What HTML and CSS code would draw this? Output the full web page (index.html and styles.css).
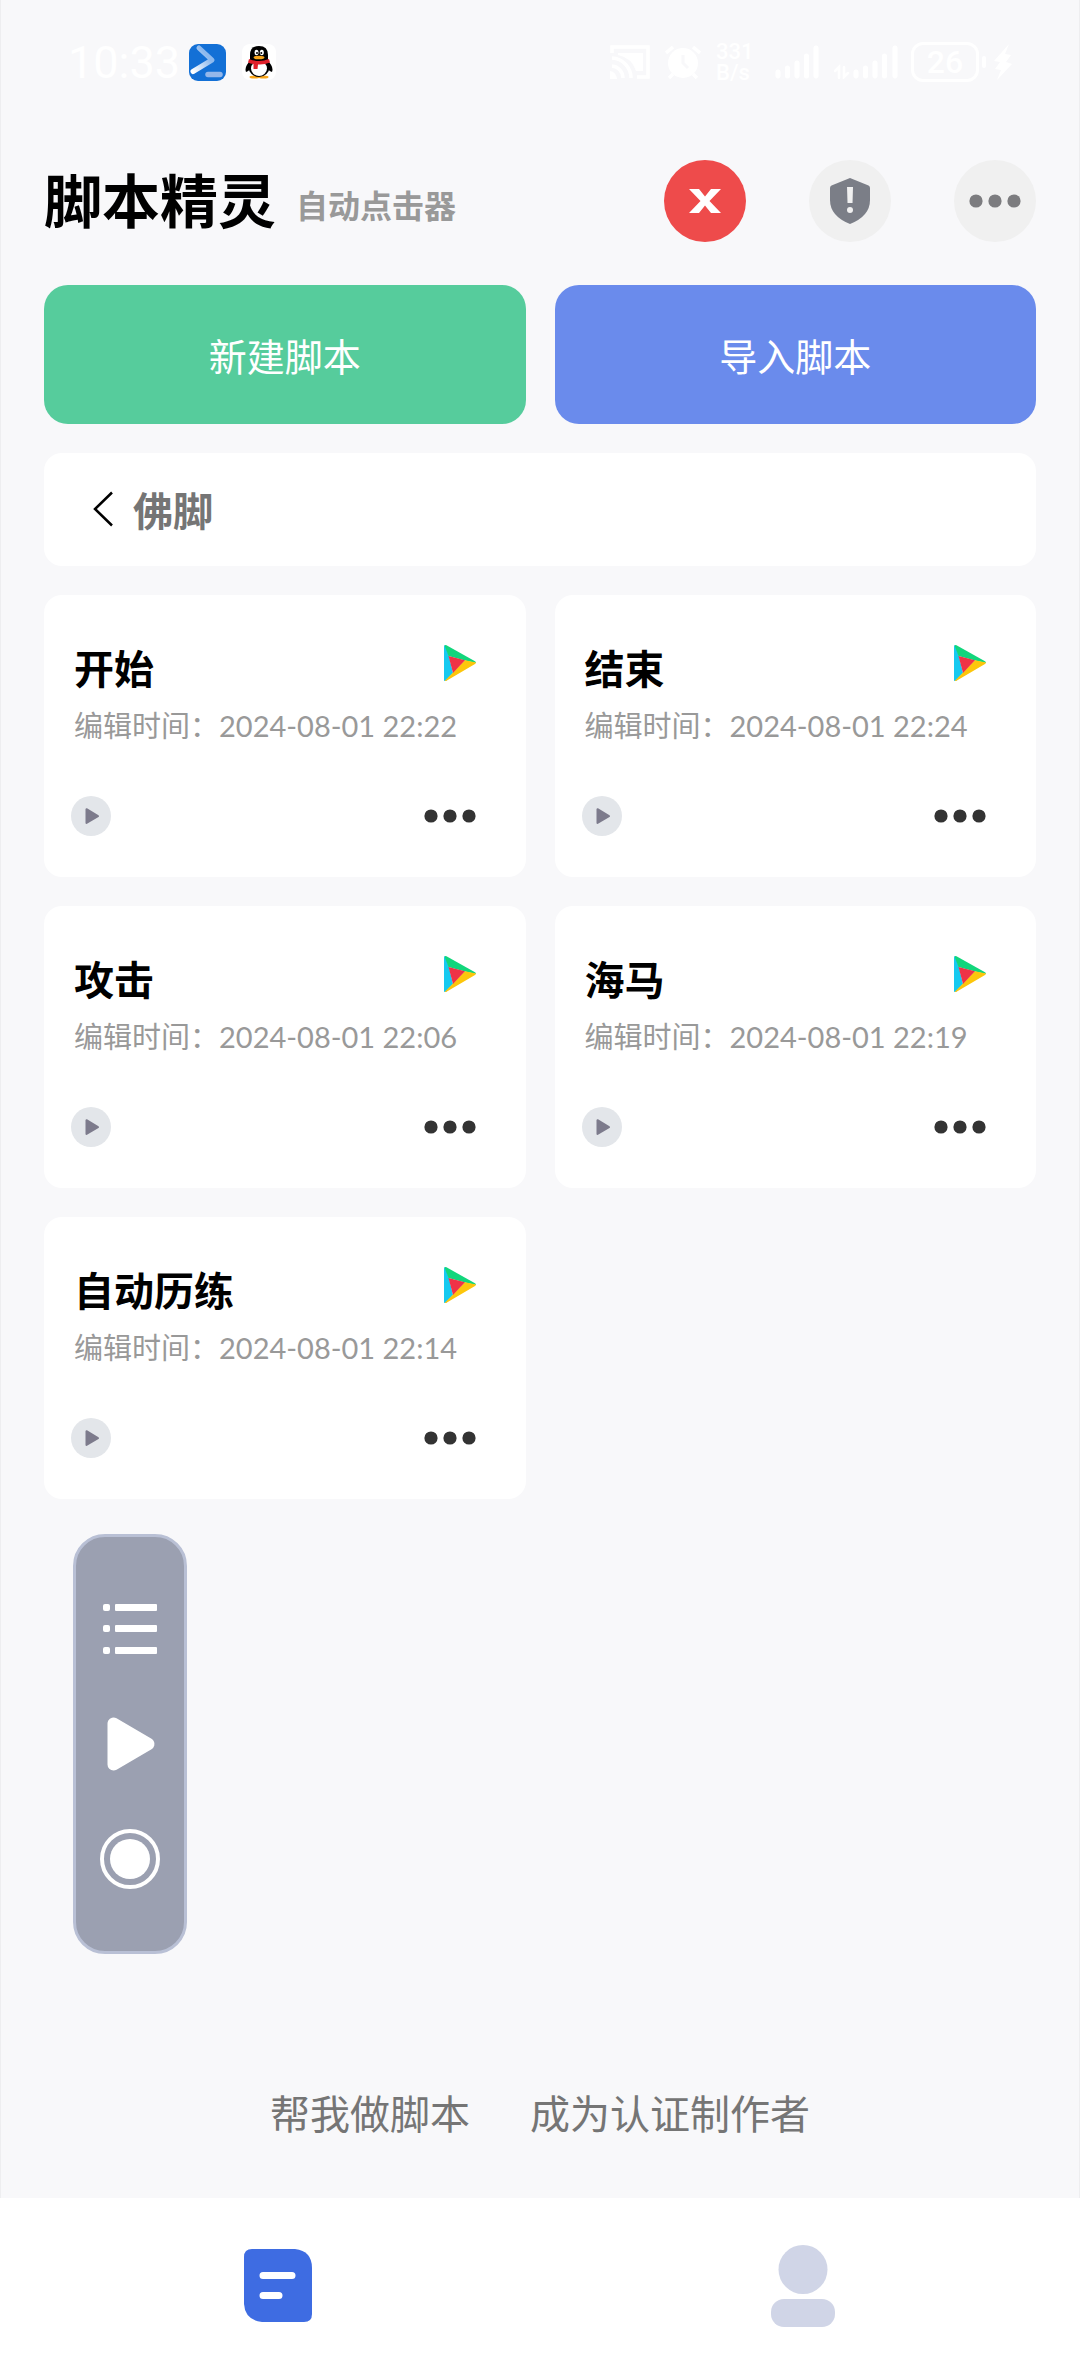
FILE: index.html
```html
<!DOCTYPE html>
<html lang="zh-CN">
<head>
    <meta charset="UTF-8">
    <meta name="viewport" content="width=device-width, initial-scale=1.0">
    <title>脚本精灵</title>
    <link rel="stylesheet" href="styles.css">
</head>
<body>
    <!-- shared icons -->
    <svg class="sprite" aria-hidden="true">
        <symbol id="icon-store" viewBox="0 0 32 36">
            <path fill="#16c9f0" d="M0 1.500Q0 0 1.200 0L5 11 9 28 2 36Q0 36.500 0 35Z"/>
            <path fill="#12d67c" d="M0.500 0.500Q1.300-0.300 2.500 0.300L31 16.200Q32 17 32 18L21 15.500 4.500 11Z"/>
            <path fill="#fdc60b" d="M32 17.500Q32 18.400 31 19L2.500 35.700Q1.500 36.300 0.800 35.800L9 27.500 21 15.300Z"/>
            <path fill="#ef3347" d="M4.500 11L21 15.300 9 28Z"/>
        </symbol>
        <symbol id="icon-run" viewBox="0 0 40 40">
            <circle cx="20" cy="20" r="20" fill="#e3e6ea"/>
            <path fill="#7d7b8c" stroke="#7d7b8c" stroke-width="2" stroke-linejoin="round" d="M15.500 13.200V27L27 20.200Z"/>
        </symbol>
        <symbol id="icon-more" viewBox="0 0 52 14">
            <circle cx="7" cy="7" r="6.600"/>
            <circle cx="26" cy="7" r="6.600"/>
            <circle cx="45" cy="7" r="6.600"/>
        </symbol>
    </svg>

    <div class="status-bar">
        <div class="status-left">
            <span class="clock">10:33</span>
            <svg width="37" height="37" viewBox="0 0 37 37">
                <defs>
                    <linearGradient id="prompt" x1="1" y1="0" x2="0" y2="1">
                        <stop offset="0.300" stop-color="#8db9ee"/>
                        <stop offset="1" stop-color="#fff"/>
                    </linearGradient>
                </defs>
                <rect width="37" height="37" rx="9" fill="#1370d6"/>
                <path d="M10 4L23 16 4 27.500" fill="none" stroke="url(#prompt)" stroke-width="5" stroke-linecap="round" stroke-linejoin="round"/>
                <path d="M19 30.500H31" stroke="#94b7ea" stroke-width="5.500" stroke-linecap="round"/>
            </svg>
            <svg class="penguin" width="34" height="36" viewBox="0 0 34 36">
                <rect width="34" height="36" rx="8" fill="#fff"/>
                <ellipse cx="12.500" cy="33" rx="5" ry="1.500" fill="#f8a51b"/>
                <ellipse cx="21.500" cy="33" rx="5" ry="1.500" fill="#f8a51b"/>
                <path d="M8 17Q2 23 4 28 6 28 8 25ZM26 17Q32 23 30 28 28 28 26 25Z"/>
                <ellipse cx="17" cy="23" rx="10.500" ry="10"/>
                <path d="M8 17V11Q8 2 17 2T26 11V17Z"/>
                <ellipse cx="17" cy="24.500" rx="8" ry="7.500" fill="#fff"/>
                <ellipse cx="14.500" cy="8.500" rx="2" ry="2.800" fill="#fff"/>
                <ellipse cx="19.800" cy="8.500" rx="2" ry="2.800" fill="#fff"/>
                <circle cx="15" cy="9" r="1"/>
                <circle cx="19.300" cy="9" r="1"/>
                <ellipse cx="17" cy="13.500" rx="5.500" ry="1.800" fill="#f8a51b"/>
                <path fill="#e0202b" d="M7 15Q17 19 27 15L28 18.500Q22 21 16 20.500L15.500 25H11.500V20Q8 19.500 6 18.500Z"/>
            </svg>
        </div>
        <div class="status-right">
            <svg width="40" height="34" viewBox="0 0 40 34" fill="none" stroke="#fff" stroke-width="3.500">
                <path d="M2 8V2H38V32H27"/>
                <path d="M2 13A20 20 0 0 1 21 33M2 21A12 12 0 0 1 13 33"/>
                <path fill="#fff" stroke="none" d="M0 26A8 8 0 0 1 7 34H0ZM8 8H33V26H26Q22 13 8 10Z"/>
            </svg>
            <svg width="36" height="34" viewBox="0 0 36 34">
                <circle cx="18" cy="18" r="15" fill="#fff"/>
                <path d="M18 10V18L23 23" fill="none" stroke="#f8f8fa" stroke-width="3"/>
                <path d="M1 8L8 2M35 8L28 2M8 29L4 33M28 29L32 33" stroke="#fff" stroke-width="3.500"/>
            </svg>
            <span class="speed">331<br>B/s</span>
            <svg class="signal" width="44" height="34" viewBox="0 0 44 34" stroke="#fff" stroke-width="5" stroke-linecap="round">
                <path d="M3 27V31M12.500 23V31M22 18V31M31.500 11V31M41 3V31"/>
            </svg>
            <svg class="signal-data" width="64" height="34" viewBox="0 0 64 34" stroke="#fff" stroke-width="5" stroke-linecap="round">
                <path d="M22 27V31M31.500 23V31M41 18V31M50.500 11V31M61 3V31"/>
                <path fill="none" stroke-width="2.500" d="M1 26L5 22V33M14 28L10 32V22"/>
            </svg>
            <span class="battery">26</span>
            <svg class="bolt" width="18" height="36" viewBox="0 0 18 36" fill="#fff">
                <path d="M15 0L0 17 6 18 1 25 7 26 3 36 18 20 12 18 17 11 11 10Z"/>
            </svg>
        </div>
    </div>

    <header class="header">
        <h1>脚本精灵</h1>
        <span class="subtitle">自动点击器</span>
        <div class="header-actions">
            <button class="round-btn close" aria-label="关闭">
                <svg width="32" height="24" viewBox="0 0 32 24"><path fill="#fff" d="M0 0H10L16 7.500 22 0H32L20.500 12 32 24H22L16 16.500 10 24H0L11.500 12Z"/></svg>
            </button>
            <button class="round-btn" aria-label="安全">
                <svg width="40" height="46" viewBox="0 0 40 46">
                    <path fill="#7b7e87" d="M20 0L38.500 7.500Q40 8.200 40 10V22Q40 38 20 46 0 38 0 22V10Q0 8.200 1.500 7.500Z"/>
                    <path fill="#f0f0f0" d="M17 9H23L22.500 25H17.500Z"/>
                    <circle cx="20" cy="32" r="3" fill="#f0f0f0"/>
                </svg>
            </button>
            <button class="round-btn more" aria-label="更多">
                <svg width="52" height="14"><use href="#icon-more"/></svg>
            </button>
        </div>
    </header>

    <main class="content">
        <div class="actions">
            <button class="action create">新建脚本</button>
            <button class="action import">导入脚本</button>
        </div>

        <button class="folder">
            <svg width="20" height="36" viewBox="0 0 20 36"><path d="M19 1.500L2 18 19 34.500" fill="none" stroke="#000" stroke-width="2.500"/></svg>
            佛脚
        </button>

        <div class="scripts">
            <article class="card">
                <div class="card-top">
                    <h2>开始</h2>
                    <svg width="32" height="36"><use href="#icon-store"/></svg>
                </div>
                <p>编辑时间：<time>2024-08-01 22:22</time></p>
                <div class="card-bottom">
                    <button aria-label="运行"><svg width="40" height="40"><use href="#icon-run"/></svg></button>
                    <button aria-label="更多"><svg width="52" height="14"><use href="#icon-more"/></svg></button>
                </div>
            </article>
            <article class="card">
                <div class="card-top">
                    <h2>结束</h2>
                    <svg width="32" height="36"><use href="#icon-store"/></svg>
                </div>
                <p>编辑时间：<time>2024-08-01 22:24</time></p>
                <div class="card-bottom">
                    <button aria-label="运行"><svg width="40" height="40"><use href="#icon-run"/></svg></button>
                    <button aria-label="更多"><svg width="52" height="14"><use href="#icon-more"/></svg></button>
                </div>
            </article>
            <article class="card">
                <div class="card-top">
                    <h2>攻击</h2>
                    <svg width="32" height="36"><use href="#icon-store"/></svg>
                </div>
                <p>编辑时间：<time>2024-08-01 22:06</time></p>
                <div class="card-bottom">
                    <button aria-label="运行"><svg width="40" height="40"><use href="#icon-run"/></svg></button>
                    <button aria-label="更多"><svg width="52" height="14"><use href="#icon-more"/></svg></button>
                </div>
            </article>
            <article class="card">
                <div class="card-top">
                    <h2>海马</h2>
                    <svg width="32" height="36"><use href="#icon-store"/></svg>
                </div>
                <p>编辑时间：<time>2024-08-01 22:19</time></p>
                <div class="card-bottom">
                    <button aria-label="运行"><svg width="40" height="40"><use href="#icon-run"/></svg></button>
                    <button aria-label="更多"><svg width="52" height="14"><use href="#icon-more"/></svg></button>
                </div>
            </article>
            <article class="card">
                <div class="card-top">
                    <h2>自动历练</h2>
                    <svg width="32" height="36"><use href="#icon-store"/></svg>
                </div>
                <p>编辑时间：<time>2024-08-01 22:14</time></p>
                <div class="card-bottom">
                    <button aria-label="运行"><svg width="40" height="40"><use href="#icon-run"/></svg></button>
                    <button aria-label="更多"><svg width="52" height="14"><use href="#icon-more"/></svg></button>
                </div>
            </article>
        </div>
    </main>

    <div class="links">
        <a href="#">帮我做脚本</a>
        <a href="#">成为认证制作者</a>
    </div>

    <nav class="tab-bar">
        <a href="#" aria-label="脚本">
            <svg width="68" height="73" viewBox="0 0 68 73">
                <path fill="#3e6ce2" d="M8 0H51Q68 2 68 19V65Q68 73 60 73H18Q1 71 0 55V8Q0 0 8 0Z"/>
                <path d="M19 26.500H48M19 46.500H35" stroke="#fff" stroke-width="7" stroke-linecap="round"/>
            </svg>
        </a>
        <a href="#" aria-label="我的">
            <svg width="64" height="82" viewBox="0 0 64 82" fill="#d0d5e7">
                <circle cx="32" cy="24.500" r="24.500"/>
                <rect y="54" width="64" height="28" rx="13"/>
            </svg>
        </a>
    </nav>

    <!-- floating script controls -->
    <div class="float-panel">
        <button aria-label="列表">
            <svg width="60" height="60" viewBox="0 0 60 60" fill="#fff">
                <rect x="3" y="5" width="7" height="7" rx="2"/><rect x="15" y="5" width="42" height="7" rx="1"/>
                <rect x="3" y="26" width="7" height="7" rx="2"/><rect x="15" y="26" width="42" height="7" rx="1"/>
                <rect x="3" y="48" width="7" height="7" rx="2"/><rect x="15" y="48" width="42" height="7" rx="1"/>
            </svg>
        </button>
        <button aria-label="播放">
            <svg width="60" height="60" viewBox="0 0 60 60">
                <path fill="#fff" stroke="#fff" stroke-width="12" stroke-linejoin="round" d="M13.500 9.500V50.500L48.500 30Z"/>
            </svg>
        </button>
        <button aria-label="录制">
            <svg width="60" height="60" viewBox="0 0 60 60">
                <circle cx="30" cy="30" r="28" fill="none" stroke="#fff" stroke-width="4"/>
                <circle cx="30" cy="30" r="20" fill="#fff"/>
            </svg>
        </button>
    </div>
</body>
</html>
```

FILE: styles.css
```css
* {
    box-sizing: border-box;
}
body {
    margin: 0;
    min-height: 100vh;
    display: flex;
    flex-direction: column;
    position: relative;
    background: #f8f8fa;
    box-shadow: inset 1px 0 #eeeef0, inset -1px 0 #eeeef0;
    color: #000;
    font-family: "Noto Sans CJK SC", sans-serif;
}
h1, h2, p {
    margin: 0;
}
button {
    margin: 0;
    padding: 0;
    border: none;
    background: none;
    font-family: inherit;
    cursor: pointer;
}
svg {
    display: block;
    flex: none;
}
.sprite {
    position: absolute;
    width: 0;
    height: 0;
}

.status-bar {
    display: flex;
    justify-content: space-between;
    align-items: center;
    height: 124px;
    padding: 0 68px;
    color: #fff;
    font-family: Roboto, sans-serif;
}
.status-left,
.status-right {
    display: flex;
    align-items: center;
}
.clock {
    font-size: 45px;
    margin-right: 9px;
}
.penguin {
    margin-left: 16px;
}
.status-right {
    gap: 15px;
}
.speed {
    width: 44px;
    font-size: 22px;
    font-weight: 500;
    line-height: 21px;
}
.signal-data {
    margin-right: -2px;
}
.battery {
    position: relative;
    width: 68px;
    height: 40px;
    border: 3px solid #fff;
    border-radius: 12px;
    font-size: 32px;
    font-weight: 500;
    line-height: 34px;
    text-align: center;
}
.battery::after {
    content: "";
    position: absolute;
    top: 11px;
    right: -10px;
    width: 4px;
    height: 12px;
    border-radius: 2px;
    background: #fff;
}

.header {
    display: flex;
    align-items: center;
    padding: 36px 44px 43px;
}
h1 {
    margin-bottom: 6px;
    font-size: 58px;
    line-height: 76px;
}
.subtitle {
    margin: 6px 0 0 20px;
    color: #999;
    font-size: 32px;
    font-weight: bold;
    line-height: 40px;
}
.header-actions {
    display: flex;
    gap: 63px;
    margin-left: auto;
}
.round-btn {
    display: flex;
    align-items: center;
    justify-content: center;
    width: 82px;
    height: 82px;
    border-radius: 50%;
    background: #f0f0f0;
}
.round-btn.close {
    background: #ee4b4b;
}
.round-btn.more {
    fill: #7c7c7f;
}

.content {
    flex: 1;
    display: flex;
    flex-direction: column;
    gap: 29px;
    padding: 0 44px;
}
.actions,
.scripts {
    display: grid;
    grid-template-columns: 1fr 1fr;
    gap: 29px;
}
.action {
    height: 139px;
    border-radius: 24px;
    color: #fff;
    font-size: 38px;
}
.create {
    background: #56cc9c;
}
.import {
    background: #6a8bec;
}
.folder {
    display: flex;
    align-items: center;
    gap: 20px;
    height: 113px;
    padding: 0 49px 2px;
    border-radius: 18px;
    background: #fff;
    color: #757575;
    font-size: 40px;
    font-weight: bold;
}
.card {
    padding: 45px 50px 41px 27px;
    border-radius: 18px;
    background: #fff;
}
.card-top {
    display: flex;
    justify-content: space-between;
    padding-left: 3px;
}
.card-top svg {
    margin-top: 5px;
}
.card h2 {
    font-size: 40px;
    line-height: 54px;
}
.card p {
    margin: 10px 0 52px;
    padding-left: 3px;
    color: #999;
    font-size: 29px;
    line-height: 40px;
    white-space: nowrap;
}
.card time {
    font-family: Lato, sans-serif;
    line-height: 1;
}
.card-bottom {
    display: flex;
    justify-content: space-between;
    align-items: center;
    fill: #333;
}

.links {
    display: flex;
    justify-content: center;
    gap: 60px;
    padding: 0 44px 56px;
}
.links a {
    color: #757575;
    font-size: 40px;
    line-height: 60px;
    text-decoration: none;
}

.tab-bar {
    display: flex;
    height: 175px;
    padding: 0 15px;
    background: #fff;
}
.tab-bar a {
    flex: 1;
    display: flex;
    align-items: center;
    justify-content: center;
}

.float-panel {
    position: absolute;
    left: 73px;
    bottom: 419px;
    display: flex;
    flex-direction: column;
    align-items: center;
    gap: 55px;
    padding: 62px 24px;
    border: 3px solid #b9c0d5;
    border-radius: 32px;
    background: #9ba0b1;
}
```
